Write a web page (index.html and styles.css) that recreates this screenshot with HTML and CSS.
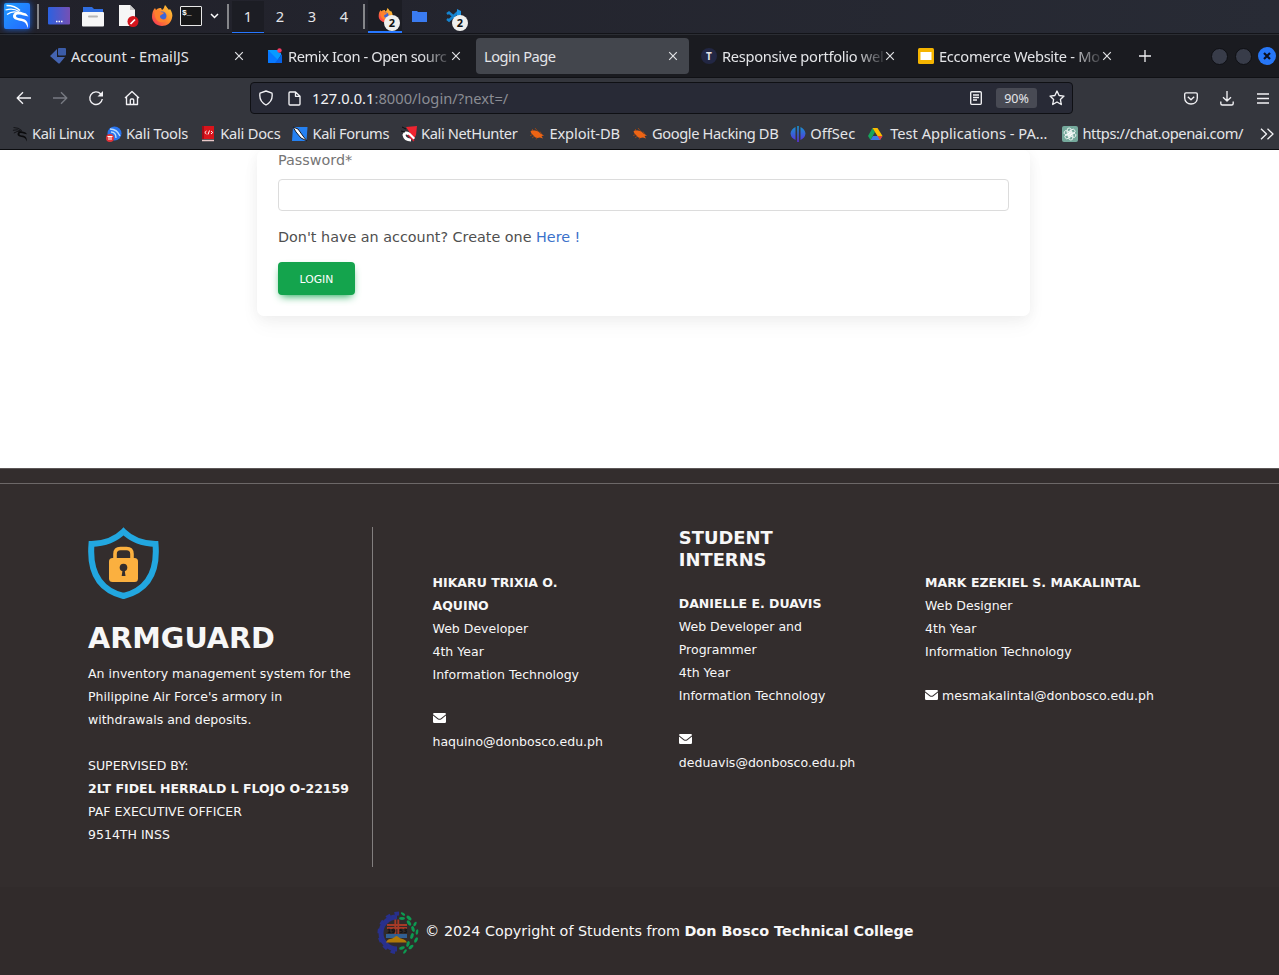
FILE: index.html
```
<!DOCTYPE html>
<html lang="en">
<head>
<meta charset="utf-8">
<title>Login Page</title>
<link rel="stylesheet" href="styles.css">
</head>
<body>
<svg width="0" height="0" class="defs">
  <defs>
    <linearGradient id="gk" x1="0" y1="0" x2="1" y2="1"><stop offset="0" stop-color="#1f9bff"/><stop offset="1" stop-color="#2468ff"/></linearGradient>
    <linearGradient id="gd" x1="0" y1="0" x2="1" y2="0"><stop offset="0" stop-color="#2b61e0"/><stop offset="1" stop-color="#7650b4"/></linearGradient>
    <linearGradient id="go" x1="0" y1="0" x2="0" y2="1"><stop offset="0" stop-color="#1696cf"/><stop offset="1" stop-color="#5b2ee0"/></linearGradient>
    <linearGradient id="gf" x1="1" y1="0" x2="0" y2="1"><stop offset="0" stop-color="#ffd43c"/><stop offset=".5" stop-color="#ff8a2b"/><stop offset="1" stop-color="#f6285c"/></linearGradient>
    <symbol id="x" viewBox="0 0 10 10"><path d="M1.200 1.200l7.600 7.600M8.800 1.200l-7.600 7.600" stroke="#e2e3e6" stroke-width="1.200" fill="none"/></symbol>
    <symbol id="dragon" viewBox="0 0 26 26"><path d="M2.500 2.500Q11 2.500 16 7.500M1.500 7Q9 4.500 15 8.500M3 11.500Q8 7.500 14 9.500" fill="none" stroke="currentColor" stroke-width="1.300"/><path d="M9 12.500C10 8.500 15 7.500 18.500 9.500L22 10.500 24.500 13.500 20 12.500C17 11.500 12 10.500 12 13C12 16 19 14.500 22 17.500C24 19.500 24 22 24 25C22.500 22 22 19.500 19 18.500C15 17 8.500 17.500 9 12.500z" fill="currentColor"/></symbol>
    <symbol id="fox" viewBox="0 0 22 22"><path d="M1 12C1 8 2 5 4 3l1 2C7 3 9 3 10 3L11 5C13 4 13 2 14 0c2 2 3 4 4 5l1-1c2 3 3 6 2 9-1 5-5 8-10 8S1 17 1 12z" fill="url(#gf)"/><circle cx="11" cy="11" r="4.500" fill="#3d66d6"/><path d="M4 6c3-2 5-1 6 1 2 0 3 1 3 1-1 2-4 1-4 4 1 3 5 3 7 1-1 4-4 5-7 4C5 16 3 11 4 6z" fill="#ff812d"/></symbol>
    <symbol id="mail" viewBox="0 0 13 10"><path d="M1.200 0h10.600Q13 0 13 1.200L8 5.200Q6.500 6.300 5 5.200L0 1.200Q0 0 1.200 0zM0 2.400l4.600 3.800q1.900 1.300 3.800 0L13 2.400V8.800Q13 10 11.800 10H1.200Q0 10 0 8.800z" fill="#fff"/></symbol>
    <symbol id="bug" viewBox="0 0 16 16"><path d="M1.500 5.500Q3 3.500 6 4.500Q10 5 11.500 7.500L15 9.500 12.500 10 14 12.500 11 11.500Q6 13 4.500 9.500Q2.500 8.500 1.500 5.500z" fill="#ee6414"/><path d="M6 2l2.500 3M3 3l2 2M11 5.500l1.500 2.500M4 8.500L1 9.500M5 10.500l-2 1.500M8 12l-1 1.500" stroke="#a9490f" stroke-width=".8"/></symbol>
  </defs>
</svg>

<header class="panel">
  <svg class="kali" width="26" height="26"><rect width="26" height="26" rx="2" fill="url(#gk)"/><use href="#dragon" color="#fff"/></svg>
  <i class="sep sep-a"></i>
  <svg class="p-desk" width="22" height="18"><rect width="22" height="17.500" rx="1" fill="url(#gd)"/><path d="M8 14.500h1.500m1 0h1.500m1 0h1.500" stroke="#fff" stroke-width="1.500"/></svg>
  <svg class="p-files" width="22" height="21"><path d="M1 1h9l2 2h9v8H1z" fill="#2f6de0"/><rect y="6" width="22" height="14.500" rx="1" fill="#f6f6f6"/><rect x="6" y="9.500" width="10" height="2" rx="1" fill="#b5b5b5"/></svg>
  <svg class="p-edit" width="21" height="22"><path d="M1 0h11l5 5v16H1z" fill="#f6f6f6"/><path d="M12 0v5h5z" fill="#c9c9c9"/><circle cx="15" cy="16.500" r="5.500" fill="#d4151d"/><path d="M12.500 19l4.500-4.500" stroke="#fff" stroke-width="1.700"/></svg>
  <svg class="p-fox" width="22" height="22"><use href="#fox"/></svg>
  <div class="term">$_</div>
  <svg class="p-chev" width="9" height="6"><path d="M1 1l3.500 3.500L8 1" fill="none" stroke="#fff" stroke-width="1.500"/></svg>
  <i class="sep sep-b"></i>
  <nav class="spaces"><b class="on">1</b><b>2</b><b>3</b><b>4</b></nav>
  <i class="sep sep-c"></i>
  <div class="task on"><svg width="15" height="15"><use href="#fox" width="15" height="15"/></svg><span class="count">2</span></div>
  <div class="task"><svg width="15" height="12"><path d="M0 1h5l1 1h9v10H0z" fill="#3a7bf0"/></svg></div>
  <div class="task"><svg width="15" height="15"><path d="M1 5l2-1.500 10 8.500M1 10l2 1.500L12 3" fill="none" stroke="#1584d0" stroke-width="2.500"/><path d="M11 0l4 2v11l-4 2z" fill="#1f97e8"/></svg><span class="count">2</span></div>
</header>

<div class="tabs">
  <div class="tab"><svg width="16" height="16"><path d="M0 8l7-7v8h8l-5 6q-1 1-2 0z" fill="#4464b0"/><rect x="8" y="0" width="8" height="7.500" rx="1" fill="#3b5ca8"/></svg><span>Account - EmailJS</span><svg class="x" width="10" height="10"><use href="#x"/></svg></div>
  <div class="tab"><svg width="16" height="16"><path d="M1 2h10c0 2 1 3 3 3v2l-5 8H2q-1 0-1-1z" fill="#079bff"/><path d="M1 2l13 13H2q-1 0-1-1z" fill="#0878ff"/><path d="M15 6v9H8z" fill="#0862e8"/><circle cx="12.500" cy="2.500" r="2.200" fill="#f43a62"/></svg><span class="fade remix">Remix Icon - Open sourc</span><svg class="x" width="10" height="10"><use href="#x"/></svg></div>
  <div class="tab active"><span>Login Page</span><svg class="x" width="10" height="10"><use href="#x"/></svg></div>
  <div class="tab"><em class="tico">T</em><span class="fade">Responsive portfolio wel</span><svg class="x" width="10" height="10"><use href="#x"/></svg></div>
  <div class="tab"><svg width="16" height="16"><rect width="16" height="16" rx="1.500" fill="#f5b400"/><rect x="2.500" y="4" width="11" height="8" fill="#fff"/></svg><span class="fade">Eccomerce Website - Mo</span><svg class="x" width="10" height="10"><use href="#x"/></svg></div>
  <svg class="plus" width="12" height="12"><path d="M6 0v12M0 6h12" stroke="#f0f0f2" stroke-width="1.300"/></svg>
  <i class="win"></i><i class="win"></i>
  <i class="win close"><svg width="8" height="8"><path d="M1 1l6 6M7 1l-6 6" stroke="#0c1020" stroke-width="2.200"/></svg></i>
</div>

<div class="nav">
  <svg class="n-back" width="16" height="14"><path d="M15 7H1.500M7 1.200L1.200 7 7 12.800" class="ln"/></svg>
  <svg class="n-fwd" width="16" height="14"><path d="M1 7h13.500M9 1.200L14.800 7 9 12.800" class="ln dim"/></svg>
  <svg class="n-rel" width="16" height="16"><path d="M14.300 9A6.300 6.300 0 1 1 12.800 4" class="ln"/><path d="M15 1v5.500H9.500z" fill="#f2f2f5"/></svg>
  <svg class="n-home" width="16" height="16"><path d="M1 8l7-6.500L15 8M2.500 7v7.500h11V7M6.300 14.500V10q0-1 1-1h1.400q1 0 1 1v4.500" class="ln"/></svg>
  <div class="url">
    <svg class="u-shield" width="16" height="16"><path d="M8 1l6 2.200c.8 5-1.200 9.300-6 11.800C3.200 12.500 1.200 8.200 2 3.200z" class="ln"/></svg>
    <svg width="13" height="15"><path d="M2 1h5.500L12 5.300V13q0 1-1 1H2q-1 0-1-1V2q0-1 1-1zM7.500 1v4.300H12" class="ln"/></svg>
    <span class="addr"><b>127.0.0.1</b>:8000/login/?next=/</span>
    <svg width="12" height="14"><rect x=".7" y=".7" width="10.600" height="12.600" rx="1" class="ln"/><path d="M3 4h6M3 6.500h6M3 9h4" class="ln"/></svg>
    <span class="zoom">90%</span>
    <svg width="16" height="16"><path d="M8 1l2.100 4.500 4.900.6-3.600 3.400.9 5L8 12l-4.300 2.500.9-5L1 6.100l4.900-.6z" class="ln"/></svg>
  </div>
  <svg class="n-pocket" width="14" height="13"><path d="M2 .8h10q1.300 0 1.300 1.300V6c0 8-12.600 8-12.600 0V2.100Q.7.8 2 .8zM3.800 4.800L7 7.800l3.200-3" class="ln"/></svg>
  <svg class="n-down" width="14" height="15"><path d="M7 0v10M3 6.300L7 10l4-3.700M.8 10.500v2q0 1.500 1.500 1.500h9.400q1.500 0 1.500-1.500v-2" class="ln"/></svg>
  <svg width="12" height="11"><path d="M0 1h12M0 5.500h12M0 10h12" class="ln"/></svg>
</div>

<div class="marks">
  <a class="t4"><svg width="16" height="16" color="#0a0a0c"><use href="#dragon" width="16" height="16"/></svg>Kali Linux</a>
  <a class="t2"><svg width="16" height="16"><circle cx="8.500" cy="7.500" r="7" fill="#2874ef"/><path d="M4 3q7 0 10 7M5 6q5 0 5 6" stroke="#b9dcff" fill="none" stroke-width="1.300"/><circle cx="4" cy="12" r="4" fill="#e13338"/><path d="M3 10v4m2-4v4M1.500 10.500h5" stroke="#fff"/></svg>Kali Tools</a>
  <a class="t2"><svg width="16" height="16"><path d="M2 0h12v13H2z" fill="#d9141b"/><path d="M2 0H4v13H2z" fill="#a20c16"/><path d="M2 14.500h12" stroke="#e9c8c8" stroke-width="1.500"/><path d="M6.500 5L4.800 6.500 6.500 8M11 5l1.700 1.500L11 8M9.500 4.500l-1.500 4" stroke="#fff" fill="none"/></svg>Kali Docs</a>
  <a class="t4"><svg width="16" height="16"><path d="M1 1h14.500l-1 14H0z" fill="#2581f2"/><path d="M1 1l5 2 5 7 4 5-6-3-5-6z" fill="#fff" stroke="#191c26"/></svg>Kali Forums</a>
  <a class="t4"><svg width="16" height="16"><path d="M5 1l11-1-1 9-2 4z" fill="#ee2430"/><path d="M13 13L8 8Q4 5.500 3 9q1 5 7 5" fill="none" stroke="#fff" stroke-width="3"/><path d="M13 15L7 9" stroke="#d51b30" stroke-width="1.500"/><path d="M1 1l4 2M0 5l4 1" stroke="#0d0d10"/></svg>Kali NetHunter</a>
  <a class="t1"><svg width="16" height="16"><use href="#bug"/></svg>Exploit-DB</a>
  <a class="t4"><svg width="16" height="16"><use href="#bug"/></svg>Google Hacking DB</a>
  <a><svg width="16" height="16"><path d="M5.500 1v13Q1 12 .5 7.500 1 3 5.500 1zM7.200 0h1.600v16H7.200zM10.500 1v13q4.500-2 5-6.500-.5-4.500-5-6.500z" fill="url(#go)"/></svg>OffSec</a>
  <a class="drive"><svg width="16" height="16"><path d="M5.500 2L1 10l2.500 4L8 6z" fill="#16a45c"/><path d="M5.500 2h5L15.500 10h-5z" fill="#fcbd00"/><path d="M3.500 14L6 10h9.500L13 14z" fill="#3b78e8"/><path d="M10.500 10h5L13 14z" fill="#e94335"/></svg>Test Applications - PA…</a>
  <a class="gpt t4"><svg width="16" height="16"><rect width="16" height="16" rx="2" fill="#75a99c"/><g fill="none" stroke="#fff" stroke-width=".8"><rect x="5.200" y="2" width="4" height="7.500" rx="2"/><rect x="5.200" y="2" width="4" height="7.500" rx="2" transform="rotate(60 8 8)"/><rect x="5.200" y="2" width="4" height="7.500" rx="2" transform="rotate(120 8 8)"/><rect x="5.200" y="2" width="4" height="7.500" rx="2" transform="rotate(180 8 8)"/><rect x="5.200" y="2" width="4" height="7.500" rx="2" transform="rotate(240 8 8)"/><rect x="5.200" y="2" width="4" height="7.500" rx="2" transform="rotate(300 8 8)"/></g></svg>https://chat.openai.com/</a>
  <svg class="more" width="14" height="12"><path d="M1 .8L6.500 6 1 11.200M7.500.8L13 6l-5.500 5.200" class="ln"/></svg>
</div>

<main class="page">
  <form class="card">
    <label>Password*</label>
    <div class="input"></div>
    <p>Don't have an account? Create one <a>Here !</a></p>
    <button type="button">LOGIN</button>
  </form>
</main>

<footer>
  <div class="rule"></div>
  <div class="cols">
    <section class="about">
      <svg width="71" height="72"><path d="M35.500 4.500C28 12 18 16.500 3.500 17 2 35 4 61 35.500 69 67 61 69 35 67.500 17 53 16.500 43 12 35.500 4.500z" fill="none" stroke="#22a7e0" stroke-width="6"/><path d="M27 33v-6q0-5.500 5.500-5.500h6q5.500 0 5.500 5.500v6" fill="none" stroke="#fbb03f" stroke-width="3.600"/><rect x="21" y="31" width="29" height="24" rx="3.500" fill="#fbb03f"/><circle cx="35.500" cy="40.500" r="3.800" fill="#332d2d"/><path d="M34.700 42h1.800l1 7h-3.800z" fill="#332d2d"/></svg>
      <h1>ARMGUARD</h1>
      <p>An inventory management system for the<br>Philippine Air Force's armory in<br>withdrawals and deposits.<br><br>SUPERVISED BY:<br><b>2LT FIDEL HERRALD L FLOJO O-22159</b><br>PAF EXECUTIVE OFFICER<br>9514TH INSS</p>
    </section>
    <section class="person side">
      <p><b>HIKARU TRIXIA O.<br>AQUINO</b><br>Web Developer<br>4th Year<br>Information Technology</p>
      <p><svg width="13" height="10"><use href="#mail"/></svg><br>haquino@donbosco.edu.ph</p>
    </section>
    <section class="person">
      <h2>STUDENT<br>INTERNS</h2>
      <p><b>DANIELLE E. DUAVIS</b><br>Web Developer and<br>Programmer<br>4th Year<br>Information Technology</p>
      <p><svg width="13" height="10"><use href="#mail"/></svg><br>deduavis@donbosco.edu.ph</p>
    </section>
    <section class="person side">
      <p><b>MARK EZEKIEL S. MAKALINTAL</b><br>Web Designer<br>4th Year<br>Information Technology</p>
      <p><svg width="13" height="10"><use href="#mail"/></svg> mesmakalintal@donbosco.edu.ph</p>
    </section>
  </div>
  <div class="copy">
    <svg width="44" height="44" viewBox="0 0 44 44">
      <path d="M22 6A16 16 0 0 0 22 38" fill="none" stroke="#28308c" stroke-width="5"/>
      <path d="M24 2.500A19.500 19.500 0 0 0 24 41.500" fill="none" stroke="#28308c" stroke-width="4" stroke-dasharray="4.500 4.250"/>
      <g fill="#0d9a51"><ellipse cx="28" cy="3" rx="2.500" ry="1.200" transform="rotate(35 28 3)"/><ellipse cx="27" cy="7.500" rx="3" ry="1.400"/><ellipse cx="34" cy="7" rx="3" ry="1.600" transform="rotate(40 34 7)"/><ellipse cx="34" cy="12" rx="3" ry="1.600" transform="rotate(55 34 12)"/><ellipse cx="40" cy="13" rx="2.500" ry="1.300" transform="rotate(120 40 13)"/><ellipse cx="38" cy="18" rx="3" ry="1.600" transform="rotate(70 38 18)"/><ellipse cx="42" cy="21" rx="2.800" ry="1.300" transform="rotate(100 42 21)"/><ellipse cx="37" cy="25" rx="3" ry="1.600" transform="rotate(110 37 25)"/><ellipse cx="41" cy="29" rx="3" ry="1.500" transform="rotate(120 41 29)"/><ellipse cx="33" cy="33" rx="3" ry="1.500" transform="rotate(110 33 33)"/><ellipse cx="36" cy="36" rx="3" ry="1.500" transform="rotate(140 36 36)"/><ellipse cx="27" cy="37" rx="3" ry="1.500" transform="rotate(160 27 37)"/><ellipse cx="30" cy="40.500" rx="2.500" ry="1.200" transform="rotate(130 30 40.500)"/></g>
      <path d="M12 14h20M12 17h20M20.300 8.500v17M23.300 8.500v17" stroke="#a63a27" stroke-width="1.800"/>
      <path d="M11 23h21v4H11z" fill="#315f92"/><path d="M11 31.500c2-5 6-3 8-5q2.500-3 5 0c3 2 6 1 8 5z" fill="#b17a08"/>
      <text x="12" y="21.500" class="yr">19</text><text x="24" y="21.500" class="yr">53</text>
    </svg>
    <span>© 2024 Copyright of Students from <b>Don Bosco Technical College</b></span>
  </div>
</footer>
</body>
</html>
```
FILE: styles.css
```
* { box-sizing: border-box; }
body { margin: 0; width: 1279px; height: 975px; overflow: hidden; display: flex; flex-direction: column; background: #fff; font-family: "Noto Sans", sans-serif; font-size: 14.67px; color: #e4e5e8; }
svg { flex: none; display: block; }
.defs { position: absolute; }
.ln { fill: none; stroke: #f2f2f5; stroke-width: 1.35; stroke-linejoin: round; }
.dim { stroke: #777a82; }

.panel { height: 33px; flex: none; display: flex; align-items: center; background: linear-gradient(90deg, #21212a, #282b35); padding: 0 0 1px 4px; }
.kali { filter: drop-shadow(0 0 3px #1b62d8); }
.sep { width: 2px; height: 25px; background: #85868a; flex: none; }
.sep-a { margin: 0 9px 0 7px; }
.p-files { margin-left: 12px; }
.p-edit { margin-left: 14px; }
.p-fox { margin-left: 12px; }
.term { width: 22px; height: 20px; margin-left: 7px; border: 1px solid #e8e8e8; border-radius: 1px; background: #171718; color: #fff; font: bold 8px/9px "Liberation Mono", monospace; padding: 1px; flex: none; }
.p-chev { margin-left: 8px; }
.sep-b { margin: 0 3px 0 8px; }
.spaces { display: flex; height: 32px; margin-bottom: -1px; }
.spaces b { width: 32px; height: 33px; font-weight: 400; font-size: 14.67px; line-height: 31px; text-align: center; }
.on { background: #1c1d24; border-bottom: 2px solid #2777ff; }
.sep-c { margin: 0 3px; }
.task { position: relative; width: 34px; height: 33px; display: flex; align-items: center; justify-content: center; }
.count { position: absolute; left: 16px; top: 15px; width: 16px; height: 16px; border-radius: 50%; background: #efefed; color: #111; font: bold 11px/16px "Noto Sans", sans-serif; text-align: center; }

.tabs { height: 45px; flex: none; display: flex; align-items: center; padding: 2px 0 2px 42px; background: #1a1b20; border-top: 1px solid #131419; box-shadow: inset 0 1px #2b2d33, inset 0 -1px #101115; }
.tab { width: 213px; margin-right: 4px; height: 36px; flex: none; border-radius: 4px; display: flex; align-items: center; padding: 0 11px 0 8px; gap: 5px; }
.tab span { flex: 1; white-space: nowrap; line-height: 24px; }
.tab .x { margin-left: -5px; }
.tab .fade { min-width: 0; letter-spacing: -.3px; -webkit-mask-image: linear-gradient(90deg, #000 82%, transparent 102%); mask-image: linear-gradient(90deg, #000 82%, transparent 102%); }
.tab .remix { letter-spacing: -.42px; }
.active { background: #43464d; }
.active span { letter-spacing: -.5px; }
.tico { width: 16px; height: 16px; border-radius: 50%; background: #222744; font: bold 10px/16px "Noto Sans", sans-serif; text-align: center; flex: none; }
.plus { margin: 0 60px 0 12px; }
.win { width: 17px; height: 17px; margin-right: 7px; border-radius: 50%; background: #383c49; border: 1px solid #0e0f13; flex: none; }
.close { width: 18px; height: 18px; margin: 0 0 0 -1px; background: #2777f7; border: 0; display: flex; align-items: center; justify-content: center; }

.nav { height: 40px; flex: none; display: flex; align-items: center; background: #34363d; padding-left: 16px; }
.n-fwd { margin-left: 20px; }
.n-rel { margin-left: 20px; }
.n-home { margin-left: 20px; }
.url { width: 823px; height: 32px; margin-left: 110px; border: 1px solid #0f1014; border-radius: 4px; background: #282a36; display: flex; align-items: center; padding: 0 7px; flex: none; }
.u-shield { margin-right: 14px; }
.addr { flex: 1; padding-left: 11px; color: #8b8d94; letter-spacing: .04px; }
.addr b { font-weight: 400; color: #f2f2f5; }
.zoom { width: 41px; height: 20px; margin: 0 12px 0 14px; border-radius: 3px; background: #484a54; font-size: 12.5px; line-height: 22px; text-align: center; }
.n-pocket { margin-left: 111px; }
.n-down { margin: 0 23px 0 22px; }

.marks { height: 32px; flex: none; display: flex; align-items: center; gap: 12px; padding: 0 0 1px 12px; background: #34363d; border-bottom: 1px solid #0b0c0f; }
.marks a { display: flex; align-items: center; gap: 4px; white-space: nowrap; flex: none; }
.marks svg { margin-top: 1px; }
.marks .t1 { letter-spacing: -.1px; }
.marks .t2 { letter-spacing: -.22px; }
.marks .t4 { letter-spacing: -.4px; }
.marks .drive { gap: 7px; }
.marks .gpt { margin-left: 3px; }
.more { margin-left: 5px; }

.page { height: 318px; flex: none; overflow: hidden; font: 14.35px/23px "DejaVu Sans", sans-serif; }
.card { width: 773px; height: 166px; margin-left: 257px; padding: 0 21px; border-radius: 7px; box-shadow: 0 2px 14px rgba(0,0,0,.05), 0 10px 20px rgba(0,0,0,.035); color: #4f4f4f; display: flex; flex-direction: column; align-items: flex-start; }
.card label { margin-top: -1px; color: #757575; }
.input { width: 731px; height: 32px; margin-top: 7px; border: 1px solid #dcdcdc; border-radius: 4px; flex: none; }
.card p { margin: 15px 0 13px; }
.card a { color: #3b71ca; }
.card button { width: 77px; height: 33px; padding: 1px 0 0; border: 0; border-radius: 4px; background: #14a44d; box-shadow: 0 4px 8px -3px #14a44d; color: #fff; font: 10.8px "DejaVu Sans", sans-serif; }

footer { flex: 1; background: #332d2d; border-top: 1px solid #5c5757; color: #f7f7f7; font: 12.53px/22.95px "DejaVu Sans", sans-serif; white-space: nowrap; }
.rule { height: 15px; border-bottom: 1px solid #6d6868; }
.cols { height: 403px; display: flex; padding: 43px 0 20px 88px; }
.about { width: 285px; height: 340px; border-right: 1px solid #827e7e; margin-right: 59.500px; }
.about h1 { margin: 22px 0 7px; font-size: 28.7px; line-height: 35px; }
p { margin: 0; }
.person { width: 246.300px; line-height: 22.9px; }
.side { padding-top: 45px; }
.person h2 { margin: 0 0 22px; font-size: 17.9px; line-height: 22px; }
.person p + p { margin-top: 21.600px; }
.person svg { display: inline-block; }
.copy { height: 88px; background: #312b2b; padding-left: 375px; display: flex; align-items: center; gap: 6px; font-size: 14.35px; }
.copy svg { margin-top: 3px; }
.yr { font: bold 6px "DejaVu Sans", sans-serif; fill: #111; }
```
